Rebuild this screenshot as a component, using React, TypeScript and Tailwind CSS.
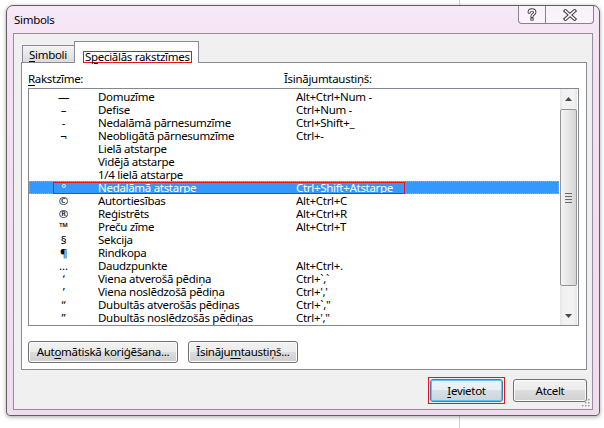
import React from 'react';

const rows: [string, string, string][] = [
  ['—', 'Domuzīme', 'Alt+Ctrl+Num -'],
  ['–', 'Defise', 'Ctrl+Num -'],
  ['-', 'Nedalāmā pārnesumzīme', 'Ctrl+Shift+_'],
  ['¬', 'Neobligātā pārnesumzīme', 'Ctrl+-'],
  ['', 'Lielā atstarpe', ''],
  ['', 'Vidējā atstarpe', ''],
  ['', '1/4 lielā atstarpe', ''],
  ['°', 'Nedalāmā atstarpe', 'Ctrl+Shift+Atstarpe'],
  ['©', 'Autortiesības', 'Alt+Ctrl+C'],
  ['®', 'Reģistrēts', 'Alt+Ctrl+R'],
  ['™', 'Preču zīme', 'Alt+Ctrl+T'],
  ['§', 'Sekcija', ''],
  ['¶', 'Rindkopa', ''],
  ['…', 'Daudzpunkte', 'Alt+Ctrl+.'],
  ['‘', 'Viena atverošā pēdiņa', 'Ctrl+`,`'],
  ['’', 'Viena noslēdzošā pēdiņa', "Ctrl+','"],
  ['“', 'Dubultās atverošās pēdiņas', 'Ctrl+`,"'],
  ['”', 'Dubultās noslēdzošās pēdiņas', "Ctrl+',\""],
];

const U = ({ children }: { children: React.ReactNode }) => (
  <span className="underline decoration-1 underline-offset-[2px]">{children}</span>
);

const btn =
  'rounded-[3px] border border-[#707070] bg-[linear-gradient(to_bottom,#f2f2f2_0%,#ebebeb_50%,#dddddd_50%,#cfcfcf_100%)] shadow-[inset_0_0_0_1px_#fbfbfb] flex items-center justify-center leading-[14px] whitespace-nowrap';

export default function App() {
  return (
    <div className="relative w-[604px] h-[428px] overflow-hidden bg-white font-['Noto_Sans',sans-serif] text-[11.5px] tracking-[-0.3px] text-black">
      <div className="absolute left-[459px] top-0 h-full w-px bg-[#cfcfcf]" />
      <div className="absolute left-[6px] top-[5px] w-[594px] h-[411px] rounded-t-[7px] rounded-b-[4px] border border-[#5f5f5f] bg-[linear-gradient(to_bottom,#f7e9f7_0%,#f3e2f3_10%,#efdcef_100%)] px-[6px] pb-[5px] flex flex-col shadow-[0_1px_4px_rgba(0,0,0,0.35)]">
        {/* title bar */}
        <div className="h-[27px] flex items-start justify-between">
          <div className="pl-[1px] pt-[6px] leading-[16px]">Simbols</div>
          <div className="flex h-[18px] mr-[-1px] rounded-b-[4px] border border-t-0 border-[#8c808c] bg-[linear-gradient(to_bottom,rgba(255,255,255,0.35),rgba(255,255,255,0.6))]">
            <div className="w-[27px] h-full flex items-center justify-center border-r border-[#8c808c]">
              <svg width="10" height="13" viewBox="0 0 10 13">
                <path d="M2.2 4.2 C2.2 1.2 7.8 1.2 7.8 4.2 C7.8 6.2 5 6.4 5 8.4" fill="none" stroke="#3a3a3a" strokeWidth="3.2" strokeLinecap="round" />
                <path d="M2.2 4.2 C2.2 1.2 7.8 1.2 7.8 4.2 C7.8 6.2 5 6.4 5 8.4" fill="none" stroke="#ffffff" strokeWidth="1.4" strokeLinecap="round" />
                <rect x="3.4" y="9.6" width="3.2" height="3" fill="#3a3a3a" />
                <rect x="4.3" y="10.4" width="1.4" height="1.4" fill="#ffffff" />
              </svg>
            </div>
            <div className="w-[47px] h-full flex items-center justify-center">
              <svg width="14" height="12" viewBox="0 0 14 12">
                <path d="M2.5 2 L11.5 10 M11.5 2 L2.5 10" stroke="#3a3a3a" strokeWidth="3.6" strokeLinecap="square" />
                <path d="M2.5 2 L11.5 10 M11.5 2 L2.5 10" stroke="#ffffff" strokeWidth="1.6" strokeLinecap="square" />
              </svg>
            </div>
          </div>
        </div>
        {/* client */}
        <div className="relative flex-1 border border-[#9a8d9a] bg-[#f0f0f0] pl-[7px] pt-[7px] flex flex-col">
          {/* tab strip */}
          <div className="relative z-10 h-[21px] flex items-end pl-[1px]">
            <div className="w-[52px] h-[17px] border border-b-0 border-r-0 border-[#898c95] bg-[linear-gradient(to_bottom,#f3f3f3,#dcdcdc)] pl-[6px] leading-[17px] whitespace-nowrap">
              <U>S</U>imboli
            </div>
            <div className="w-[125px] h-[22px] mb-[-1px] border border-b-0 border-[#898c95] bg-white pl-[8px] pt-[6px]">
              <div className="inline-block h-[12px] border border-[#e4141b] pl-[1px] pr-[1px] leading-[10px] whitespace-nowrap">
                S<U>p</U>eciālās rakstzīmes
              </div>
            </div>
          </div>
          {/* panel */}
          <div className="w-[566px] h-[308px] border border-[#898c95] bg-white pl-[6px] flex flex-col">
            <div className="h-[25px] flex pt-[9px] leading-[14px]">
              <div className="w-[256px]">
                <U>R</U>akstzīme:
              </div>
              <div>Īsinājumtaustiņš:</div>
            </div>
            <div className="w-[551px] h-[238px] border border-[#828790] bg-white flex overflow-hidden">
              <div className="w-[530px] pt-[1px] flex flex-col">
                {rows.map(([s, n, k], i) => {
                  const sel = i === 7;
                  return (
                    <div
                      key={i}
                      className={
                        'relative h-[13px] leading-[13px] flex shrink-0 ' +
                        (sel ? 'bg-[#3399ff] text-white' : '')
                      }
                    >
                      {sel && (
                        <>
                          <div className="absolute inset-0 border border-dotted border-[#d8a060]" />
                          <div className="absolute left-[24px] top-[1px] w-[352px] h-[12px] border border-[#e4141b]" />
                        </>
                      )}
                      <div className="w-[69px] text-center">{s}</div>
                      <div className="w-[198px] whitespace-nowrap">{n}</div>
                      <div className="whitespace-nowrap">{k}</div>
                    </div>
                  );
                })}
              </div>
              <div className="ml-[1px] w-[17px] flex flex-col bg-[linear-gradient(to_right,#e6e6e6,#f2f2f2_20%,#f2f2f2_80%,#e6e6e6)]">
                <div className="h-[20px] flex items-center justify-center">
                  <svg width="7" height="4" viewBox="0 0 7 4">
                    <path d="M0 4 L3.5 0 L7 4 Z" fill="#4a4a4a" />
                  </svg>
                </div>
                <div className="h-[177px] rounded-[2px] border border-[#959595] bg-[linear-gradient(to_right,#f4f4f4,#e6e6e6_50%,#d4d4d4)] flex flex-col items-center justify-center gap-[2px]">
                  <div className="w-[7px] h-px bg-[#6a6a6a]" />
                  <div className="w-[7px] h-px bg-[#6a6a6a]" />
                  <div className="w-[7px] h-px bg-[#6a6a6a]" />
                  <div className="w-[7px] h-px bg-[#6a6a6a]" />
                </div>
                <div className="flex-1" />
                <div className="h-[18px] flex items-center justify-center">
                  <svg width="7" height="4" viewBox="0 0 7 4">
                    <path d="M0 0 L7 0 L3.5 4 Z" fill="#4a4a4a" />
                  </svg>
                </div>
              </div>
            </div>
            <div className="mt-[15px] flex gap-[10px]">
              <div className={btn + ' w-[150px] h-[22px]'}>
                Aut<U>o</U>mātiskā koriģēšana...
              </div>
              <div className={btn + ' w-[110px] h-[22px]'}>
                Īsināju<U>m</U>taustiņš...
              </div>
            </div>
          </div>
          {/* dialog buttons */}
          <div className="w-[566px] mt-[7px] flex justify-end items-start">
            <div className="border border-[#e4141b] p-[1px]">
              <div className="w-[73px] h-[23px] rounded-[3px] border border-[#3c7fb1] bg-[linear-gradient(to_bottom,#eef5f9_0%,#e6eef3_50%,#d6e0e6_50%,#c8d4db_100%)] shadow-[inset_0_0_0_1px_#5ec8f2] flex items-center justify-center leading-[14px]">
                <U>I</U>evietot
              </div>
            </div>
            <div className={btn + ' ml-[8px] mt-[2px] w-[74px] h-[23px]'}>Atcelt</div>
          </div>
          {/* resize grip */}
          <svg className="absolute right-[1px] bottom-[1px]" width="10" height="10" viewBox="0 0 10 10">
            {[
              [8, 2],
              [8, 5],
              [5, 5],
              [8, 8],
              [5, 8],
              [2, 8],
            ].map(([x, y], i) => (
              <g key={i}>
                <rect x={x} y={y} width="1.5" height="1.5" fill="#ffffff" />
                <rect x={x - 1} y={y - 1} width="1.5" height="1.5" fill="#9a9a9a" />
              </g>
            ))}
          </svg>
        </div>
      </div>
    </div>
  );
}
